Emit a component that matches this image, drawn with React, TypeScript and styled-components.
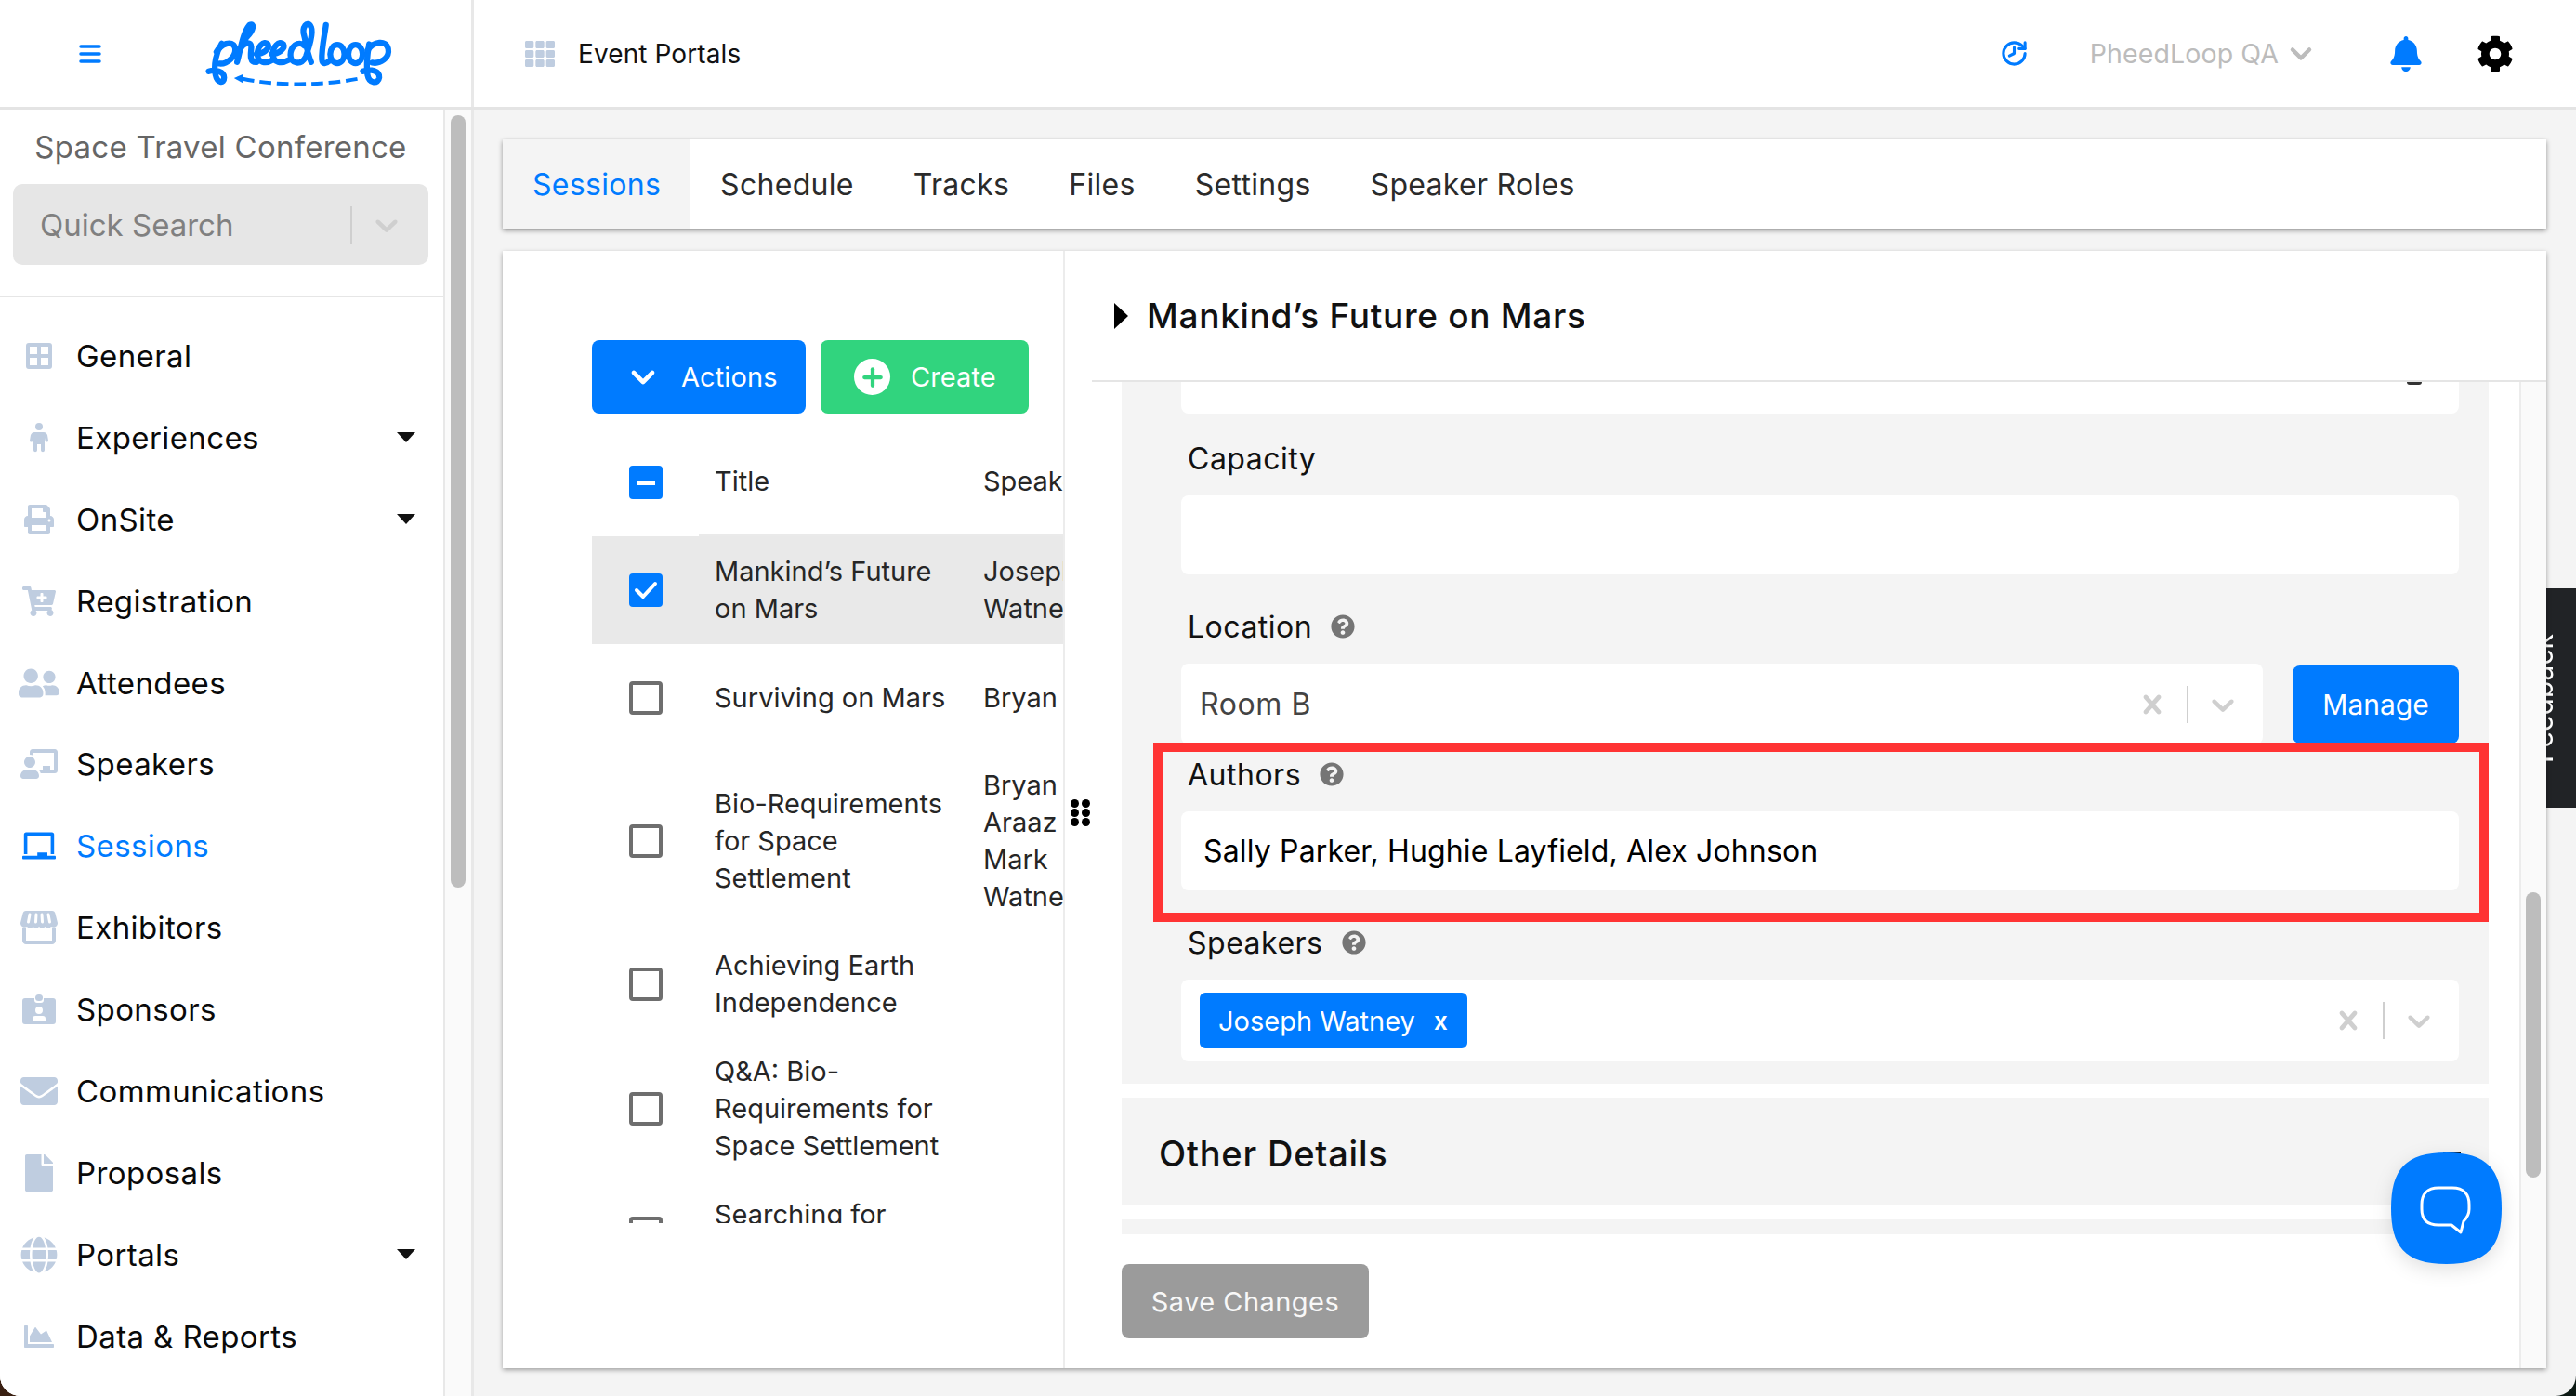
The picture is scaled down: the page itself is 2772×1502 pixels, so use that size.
import React from 'react'
import styled, { createGlobalStyle } from 'styled-components'
import { ChevronDown, History, Plus } from 'lucide-react'
import {
  FaBell,
  FaCartPlus,
  FaChalkboard,
  FaChalkboardTeacher,
  FaChartArea,
  FaCog,
  FaEnvelope,
  FaFile,
  FaGlobe,
  FaPrint,
  FaQuestionCircle,
  FaTh,
  FaUserFriends,
} from 'react-icons/fa'

const BLUE = '#007bff'
const ICON = '#bfcde0'
const FONT = 'Inter, "Open Sans", sans-serif'

const Global = createGlobalStyle`
  html, body { margin: 0; padding: 0; width: 2772px; height: 1502px; overflow: hidden; }
  body { background: linear-gradient(90deg, #3a2012, #0c1a14); font-family: ${FONT}; }
  * { box-sizing: border-box; }
`

const Frame = styled.div`
  position: relative;
  width: 2772px;
  height: 1502px;
  display: flex;
  flex-direction: column;
  overflow: hidden;
  background: #f4f4f4;
  border-radius: 0 0 22px 22px;
`

/* top bar */
const TopBar = styled.header`
  height: 118px;
  flex: none;
  display: flex;
  background: #fff;
  border-bottom: 3px solid #e4e4e4;
`
const Brand = styled.div`
  width: 510px;
  display: flex;
  align-items: center;
  gap: 112px;
  padding-left: 85px;
  border-right: 3px solid #e8e8e8;
`
const Crumb = styled.div`
  flex: 1;
  display: flex;
  align-items: center;
  gap: 25px;
  padding: 0 67px 0 55px;
  font-size: 28px;
  letter-spacing: 0.1px;
  color: #111;
`
const TopRight = styled.div`
  margin-left: auto;
  display: flex;
  align-items: center;
`
const Account = styled.div`
  display: flex;
  align-items: center;
  gap: 6px;
  margin: 0 76px 0 66px;
  font-size: 28.5px;
  color: #bcbcbc;
`

/* sidebar */
const Body = styled.div`
  flex: 1;
  min-height: 0;
  display: flex;
`
const Sidebar = styled.aside`
  width: 510px;
  flex: none;
  display: flex;
  background: #fafafa;
  border-right: 3px solid #e8e8e8;
`
const SideMain = styled.div`
  width: 479px;
  flex: none;
  background: #fff;
  border-right: 2px solid #e8e8e8;
  overflow: hidden;
`
const SideHead = styled.div`
  height: 202px;
  padding: 16px 16px 0 14px;
  border-bottom: 2px solid #e6e6e6;
`
const EventName = styled.div`
  height: 48px;
  line-height: 48px;
  text-align: center;
  font-size: 33px;
  letter-spacing: 0.25px;
  color: #666;
`
const QuickSearch = styled.div`
  height: 87px;
  margin-top: 16px;
  display: flex;
  align-items: center;
  padding: 0 25px 0 29px;
  background: #e6e6e6;
  border-radius: 10px;
  font-size: 33px;
  color: #808080;
`
const SearchLabel = styled.span`
  flex: 1;
`
const Nav = styled.nav`
  padding-top: 19px;
`
const NavRow = styled.div<{ $active?: boolean }>`
  height: 87.9px;
  display: flex;
  align-items: center;
  gap: 18px;
  padding-left: 20px;
  font-size: 33px;
  letter-spacing: 0.4px;
  color: ${(p) => (p.$active ? BLUE : '#0a0a0a')};
`
const NavIcon = styled.span<{ $active?: boolean }>`
  width: 44px;
  height: 44px;
  flex: none;
  display: flex;
  align-items: center;
  justify-content: center;
  color: ${(p) => (p.$active ? BLUE : ICON)};
`
const Caret = styled.span`
  margin-left: auto;
  margin-right: 30px;
  width: 0;
  height: 0;
  border-left: 10px solid transparent;
  border-right: 10px solid transparent;
  border-top: 11px solid #111;
`
const SideTrack = styled.div`
  flex: 1;
  padding: 6px 6px 0;
`
const Thumb = styled.div<{ $height: number }>`
  width: 16px;
  height: ${(p) => p.$height}px;
  border-radius: 8px;
  background: #bdbdbd;
`

/* main column */
const Main = styled.main`
  flex: 1;
  min-width: 0;
  display: flex;
  flex-direction: column;
  gap: 24px;
  padding: 32px 32px 30px 31px;
`
const TabBar = styled.div`
  position: relative;
  z-index: 1;
  height: 96px;
  flex: none;
  display: flex;
  background: #fff;
  box-shadow: 0 2px 5px rgba(0, 0, 0, 0.4);
`
const Tab = styled.div<{ $active?: boolean }>`
  display: flex;
  align-items: center;
  padding: 0 32px;
  font-size: 32px;
  letter-spacing: 0.3px;
  background: ${(p) => (p.$active ? '#f4f4f4' : 'transparent')};
  color: ${(p) => (p.$active ? BLUE : '#2b2b2b')};
`
const Card = styled.section`
  position: relative;
  z-index: 1;
  flex: 1;
  min-height: 0;
  display: flex;
  background: #fff;
  box-shadow: 0 2px 5px rgba(0, 0, 0, 0.35);
`
const ListPane = styled.div`
  width: 605px;
  flex: none;
  padding: 96px 0 0 96px;
  border-right: 2px solid #ececec;
  overflow: hidden;
`
const Actions = styled.div`
  display: flex;
  gap: 16px;
  margin-bottom: 16px;
`
const Button = styled.button<{ $color: string; $width: number; $gap: number; $pad: number }>`
  height: 79px;
  width: ${(p) => p.$width}px;
  display: flex;
  align-items: center;
  gap: ${(p) => p.$gap}px;
  padding: 0 0 0 ${(p) => p.$pad}px;
  border: 0;
  border-radius: 8px;
  background: ${(p) => p.$color};
  color: #fff;
  font-family: ${FONT};
  font-size: 29px;
  letter-spacing: 0.1px;
`
const PlusDisc = styled.span`
  width: 39px;
  height: 39px;
  border-radius: 50%;
  background: #fff;
  color: #31d47e;
  display: flex;
  align-items: center;
  justify-content: center;
`
const ListClip = styled.div`
  height: 855px;
  overflow: hidden;
`
const Row = styled.div<{ $selected?: boolean }>`
  display: grid;
  grid-template-columns: 115px 306px 1fr;
  min-height: 116px;
  background: ${(p) => (p.$selected ? '#e9e9e9' : 'transparent')};
  font-size: 29px;
  line-height: 40px;
  color: #262626;
  white-space: nowrap;
`
const Cell = styled.div<{ $line?: boolean; $pad?: number }>`
  display: flex;
  align-items: center;
  padding: 16px 0 16px ${(p) => p.$pad ?? 0}px;
  overflow: hidden;
  border-bottom: ${(p) => (p.$line ? '2px solid #eaeaea' : '0')};
`
const CheckCell = styled(Cell)`
  justify-content: center;
`
const Check = styled.span<{ $on?: boolean }>`
  width: 36px;
  height: 36px;
  flex: none;
  display: flex;
  align-items: center;
  justify-content: center;
  border-radius: 4px;
  background: ${(p) => (p.$on ? BLUE : '#fff')};
  border: ${(p) => (p.$on ? '0' : '4px solid #6e6e6e')};
`
const MinusBar = styled.span`
  width: 20px;
  height: 5px;
  background: #fff;
`
const Grip = styled.div`
  position: absolute;
  left: 611px;
  top: 590px;
  width: 21px;
  display: grid;
  grid-template-columns: 9px 9px;
  gap: 1px 3px;
  & > i {
    width: 9px;
    height: 9px;
    border-radius: 50%;
    background: #000;
  }
`

/* detail pane */
const DetailPane = styled.div`
  flex: 1;
  min-width: 0;
  display: flex;
  flex-direction: column;
`
const DetailHead = styled.div`
  height: 141px;
  flex: none;
  margin-left: 29px;
  display: flex;
  align-items: center;
  gap: 20px;
  padding-left: 24px;
  border-bottom: 2px solid #e5e5e5;
  font-size: 37px;
  font-weight: 500;
  letter-spacing: 0.7px;
  color: #111;
`
const Triangle = styled.span`
  width: 0;
  height: 0;
  border-top: 14px solid transparent;
  border-bottom: 14px solid transparent;
  border-left: 15px solid #000;
`
const DetailBody = styled.div`
  flex: 1;
  min-height: 0;
  display: flex;
`
const FormColumn = styled.div`
  flex: 1;
  min-width: 0;
  display: flex;
  flex-direction: column;
`
const FormClip = styled.div`
  position: relative;
  height: 917px;
  flex: none;
  padding: 0 33px 0 61px;
  overflow: hidden;
`
const Sheet = styled.div<{ $height?: number }>`
  background: #f4f4f4;
  margin-bottom: 15px;
  height: ${(p) => (p.$height ? `${p.$height}px` : 'auto')};
`
const Fields = styled(Sheet)`
  padding: 0 32px 24px 64px;
`
const FieldLabel = styled.div<{ $top: number }>`
  height: 48px;
  margin: ${(p) => p.$top}px 0 16px 7px;
  display: flex;
  align-items: center;
  gap: 20px;
  font-size: 32px;
  letter-spacing: 0.5px;
  color: #111;
`
const Box = styled.div<{ $height: number }>`
  height: ${(p) => p.$height}px;
  flex: 1;
  min-width: 0;
  display: flex;
  align-items: center;
  background: #fff;
  border-radius: 8px;
`
const StubBox = styled(Box)`
  align-items: flex-start;
  justify-content: flex-end;
  padding-right: 40px;
  border-radius: 0 0 8px 8px;
`
const StubMark = styled.span`
  width: 16px;
  height: 3px;
  background: #333;
  border-radius: 0 0 8px 8px;
`
const SelectValue = styled.span`
  flex: 1;
  padding-left: 20px;
  font-size: 32px;
  letter-spacing: 0.6px;
  color: #444;
`
const InputText = styled.span`
  padding-left: 24px;
  font-size: 32px;
  letter-spacing: 0.15px;
  color: #000;
`
const Indicators = styled.span<{ $flush?: boolean }>`
  display: flex;
  align-items: center;
  gap: 17px;
  padding-right: ${(p) => (p.$flush ? 0 : 23)}px;
`
const IndicatorRule = styled.span`
  width: 2px;
  height: 40px;
  background: #cfcfcf;
`
const ReactSelectIcon = styled.svg`
  width: 40px;
  height: 40px;
  fill: #cfcfcf;
`
const InlineField = styled.div`
  display: flex;
  align-items: flex-start;
  gap: 32px;
`
const ManageButton = styled.button`
  width: 179px;
  height: 84px;
  margin-top: 2px;
  border: 0;
  border-radius: 8px;
  background: ${BLUE};
  color: #fff;
  font-family: ${FONT};
  font-size: 30px;
`
const TagWrap = styled.span`
  flex: 1;
  padding-left: 20px;
`
const Tag = styled.span`
  display: inline-flex;
  align-items: center;
  gap: 20px;
  height: 60px;
  padding: 0 21px 0 20px;
  border-radius: 6px;
  background: ${BLUE};
  color: #fff;
  font-size: 29px;
`
const TagClose = styled.span`
  font-size: 26px;
  font-weight: 600;
`
const SectionHead = styled(Sheet)`
  display: flex;
  align-items: center;
  justify-content: space-between;
  padding: 4px 30px 0 40px;
  font-size: 38px;
  font-weight: 500;
  letter-spacing: 0.8px;
  color: #111;
`
const Collapse = styled.span`
  width: 19px;
  height: 3px;
  background: #111;
`
const Highlight = styled.div`
  position: absolute;
  left: 95px;
  top: 388px;
  width: 1437px;
  height: 193px;
  border: 10px solid #ff3333;
  pointer-events: none;
`
const FormFooter = styled.div`
  padding: 32px 0 0 61px;
`
const SaveButton = styled.button`
  width: 266px;
  height: 80px;
  border: 0;
  border-radius: 8px;
  background: #9b9b9b;
  color: #f8f8f8;
  font-family: ${FONT};
  font-size: 29px;
  letter-spacing: 0.45px;
`
const DetailTrack = styled.div`
  width: 29px;
  flex: none;
  padding: 549px 0 0 5px;
  background: #fafafa;
  border-left: 2px solid #ececec;
`

/* overlays */
const Feedback = styled.div`
  position: absolute;
  right: 0;
  top: 633px;
  width: 72px;
  height: 236px;
  display: flex;
  align-items: center;
  justify-content: flex-end;
  padding-right: 21px;
  background: #212326;
  color: #fff;
  font-size: 30px;
`
const FeedbackText = styled.span`
  writing-mode: vertical-rl;
  transform: rotate(180deg);
  line-height: 30px;
`
const ChatBubble = styled.div`
  position: absolute;
  z-index: 2;
  right: 80px;
  bottom: 142px;
  width: 119px;
  height: 120px;
  filter: drop-shadow(0 6px 10px rgba(0, 0, 0, 0.12));
`

const Logo = () => (
  <svg width="203" height="73" viewBox="120 60 610 220" fill="none" stroke={BLUE} strokeWidth="19" strokeLinecap="round" strokeLinejoin="round" aria-label="pheedloop logo">
    <path d="M172 138C155 165 145 205 152 240C157 265 180 270 180 248C180 228 150 222 130 228" />
    <path d="M155 165C170 140 205 125 215 150C222 178 190 205 165 203" />
    <path d="M222 198C235 150 240 105 262 78C280 70 275 95 255 115C245 128 238 135 232 155C245 135 268 128 268 150C268 165 258 200 285 198" />
    <path d="M285 172C305 172 330 155 322 140C310 125 285 150 288 175C290 200 315 205 335 192" />
    <path d="M335 172C355 172 380 155 372 140C360 125 335 150 338 175C340 200 365 205 388 192" />
    <path d="M440 145C420 125 395 150 395 175C395 205 430 210 445 180C455 150 470 105 462 85C450 60 430 85 440 115C445 135 450 170 462 198" />
    <path d="M510 78C505 115 495 160 497 190C498 205 510 205 520 195" />
    <ellipse cx="547" cy="172" rx="23" ry="30" />
    <ellipse cx="606" cy="172" rx="23" ry="30" />
    <path d="M650 140C645 170 640 210 645 240C650 268 680 270 683 248C685 228 655 218 630 228" />
    <path d="M645 160C665 130 705 125 712 155C718 185 685 205 660 200" />
    <path d="M240 252C340 275 500 275 615 252" strokeWidth="12" strokeDasharray="38 18" strokeLinecap="butt" />
    <path d="M212 250L240 238V266Z" fill={BLUE} stroke="none" />
  </svg>
)

const Hamburger = () => (
  <svg width="24" height="22" viewBox="0 0 24 22" stroke={BLUE} strokeWidth="3.5" strokeLinecap="round">
    <path d="M2 3H22M2 11H22M2 19H22" />
  </svg>
)

const GeneralIcon = () => (
  <svg width="28" height="28" viewBox="0 0 28 28" fill={ICON}>
    <path fillRule="evenodd" d="M3 0H25A3 3 0 0 1 28 3V25A3 3 0 0 1 25 28H3A3 3 0 0 1 0 25V3A3 3 0 0 1 3 0ZM4 4V12H12V4ZM16 4V12H24V4ZM4 16V24H12V16ZM16 16V24H24V16Z" />
  </svg>
)

const PersonIcon = () => (
  <svg width="20" height="32" viewBox="0 0 20 32" fill={ICON}>
    <circle cx="10" cy="4" r="4" />
    <path d="M5 10H15C17 10 18 11 19 13L20 19C20 21 17 21 16.5 19L16 16V29C16 32 12 32 12 29V23H8V29C8 32 4 32 4 29V16L3.5 19C3 21 0 21 0 19L1 13C2 11 3 10 5 10Z" />
  </svg>
)

const StoreIcon = () => (
  <svg width="40" height="36" viewBox="0 0 40 36">
    <path d="M6 0H34C36 0 37 1 37.5 3L40 13C40 17 36 19 33 17C31 19 28 19 26.5 17C24.5 19 22 19 20 17C18 19 15.500 19 13.500 17C12 19 9 19 7 17C4 19 0 17 0 13L2.500 3C3 1 4 0 6 0Z" fill={ICON} />
    <path d="M10 4L8.500 12M17 4L16.500 12M23 4L23.500 12M30 4L31.500 12" stroke="#fff" strokeWidth="3" strokeLinecap="round" />
    <path d="M4 18V32C4 33 5 34 6 34H34C35 34 36 33 36 32V18" fill="none" stroke={ICON} strokeWidth="4" />
  </svg>
)

const BadgeIcon = () => (
  <svg width="36" height="32" viewBox="0 0 36 32" fill={ICON}>
    <path fillRule="evenodd" d="M3 4H13V6A3 3 0 0 0 16 9H20A3 3 0 0 0 23 6V4H33A3 3 0 0 1 36 7V29A3 3 0 0 1 33 32H3A3 3 0 0 1 0 29V7A3 3 0 0 1 3 4ZM18 13A4 4 0 1 0 18 21A4 4 0 0 0 18 13ZM11 28H25V26A3 3 0 0 0 22 23H14A3 3 0 0 0 11 26Z" />
    <rect x="14" y="0" width="8" height="7" rx="3.5" />
  </svg>
)

const crossPath =
  'M14.348 14.849c-0.469 0.469-1.229 0.469-1.697 0l-2.651-3.030-2.651 3.029c-0.469 0.469-1.229 0.469-1.697 0-0.469-0.469-0.469-1.229 0-1.697l2.758-3.15-2.759-3.152c-0.469-0.469-0.469-1.228 0-1.697s1.228-0.469 1.697 0l2.652 3.031 2.651-3.031c0.469-0.469 1.228-0.469 1.697 0s0.469 1.229 0 1.697l-2.758 3.152 2.758 3.15c0.469 0.469 0.469 1.229 0 1.698z'
const chevronPath =
  'M4.516 7.548c0.436-0.446 1.043-0.481 1.576 0l3.908 3.747 3.908-3.747c0.533-0.481 1.141-0.446 1.574 0 0.436 0.445 0.408 1.197 0 1.615-0.406 0.418-4.695 4.502-4.695 4.502-0.217 0.223-0.502 0.335-0.787 0.335s-0.57-0.112-0.789-0.335c0 0-4.287-4.084-4.695-4.502s-0.436-1.17 0-1.615z'

const Cross = () => (
  <ReactSelectIcon viewBox="0 0 20 20">
    <path d={crossPath} />
  </ReactSelectIcon>
)
const Chevron = () => (
  <ReactSelectIcon viewBox="0 0 20 20">
    <path d={chevronPath} />
  </ReactSelectIcon>
)

const navItems = [
  { label: 'General', icon: <GeneralIcon /> },
  { label: 'Experiences', icon: <PersonIcon />, caret: true },
  { label: 'OnSite', icon: <FaPrint size={32} />, caret: true },
  { label: 'Registration', icon: <FaCartPlus size={36} /> },
  { label: 'Attendees', icon: <FaUserFriends size={44} /> },
  { label: 'Speakers', icon: <FaChalkboardTeacher size={40} /> },
  { label: 'Sessions', icon: <FaChalkboard size={36} />, active: true },
  { label: 'Exhibitors', icon: <StoreIcon /> },
  { label: 'Sponsors', icon: <BadgeIcon /> },
  { label: 'Communications', icon: <FaEnvelope size={40} /> },
  { label: 'Proposals', icon: <FaFile size={40} /> },
  { label: 'Portals', icon: <FaGlobe size={40} />, caret: true },
  { label: 'Data & Reports', icon: <FaChartArea size={32} /> },
]

const tabs = ['Sessions', 'Schedule', 'Tracks', 'Files', 'Settings', 'Speaker Roles']

const sessions = [
  { title: ['Mankind’s Future', 'on Mars'], speakers: ['Joseph', 'Watney'], selected: true },
  { title: ['Surviving on Mars'], speakers: ['Bryan'] },
  { title: ['Bio-Requirements', 'for Space', 'Settlement'], speakers: ['Bryan', 'Araaz', 'Mark', 'Watney'] },
  { title: ['Achieving Earth', 'Independence'], speakers: [] },
  { title: ['Q&A: Bio-', 'Requirements for', 'Space Settlement'], speakers: [] },
  { title: ['Searching for', 'Water on Mars'], speakers: [] },
]

const Lines = ({ lines }: { lines: string[] }) => (
  <div>
    {lines.map((line) => (
      <div key={line}>{line}</div>
    ))}
  </div>
)

const App = () => (
  <Frame>
    <Global />
    <TopBar>
      <Brand>
        <Hamburger />
        <Logo />
      </Brand>
      <Crumb>
        <FaTh size={32} color={ICON} />
        Event Portals
        <TopRight>
          <History size={31} color={BLUE} strokeWidth={2.4} style={{ transform: 'scaleX(-1)' }} />
          <Account>
            PheedLoop QA
            <ChevronDown size={36} strokeWidth={3} />
          </Account>
          <FaBell size={38} color={BLUE} />
          <FaCog size={40} color="#000" style={{ marginLeft: 57 }} />
        </TopRight>
      </Crumb>
    </TopBar>
    <Body>
      <Sidebar>
        <SideMain>
          <SideHead>
            <EventName>Space Travel Conference</EventName>
            <QuickSearch>
              <SearchLabel>Quick Search</SearchLabel>
              <Indicators $flush>
                <IndicatorRule />
                <Chevron />
              </Indicators>
            </QuickSearch>
          </SideHead>
          <Nav>
            {navItems.map((item) => (
              <NavRow key={item.label} $active={item.active}>
                <NavIcon $active={item.active}>{item.icon}</NavIcon>
                {item.label}
                {item.caret && <Caret />}
              </NavRow>
            ))}
          </Nav>
        </SideMain>
        <SideTrack>
          <Thumb $height={831} />
        </SideTrack>
      </Sidebar>
      <Main>
        <TabBar>
          {tabs.map((tab, i) => (
            <Tab key={tab} $active={i === 0}>
              {tab}
            </Tab>
          ))}
        </TabBar>
        <Card>
          <ListPane>
            <Actions>
              <Button $color={BLUE} $width={230} $gap={21} $pad={35}>
                <ChevronDown size={40} strokeWidth={2.8} />
                Actions
              </Button>
              <Button $color="#31d47e" $width={224} $gap={22} $pad={36}>
                <PlusDisc>
                  <Plus size={30} strokeWidth={3.4} />
                </PlusDisc>
                Create
              </Button>
            </Actions>
            <ListClip>
              <Row>
                <CheckCell>
                  <Check $on>
                    <MinusBar />
                  </Check>
                </CheckCell>
                <Cell $line $pad={17}>Title</Cell>
                <Cell $line>Speakers</Cell>
              </Row>
              {sessions.map((s) => (
                <Row key={s.title[0]} $selected={s.selected}>
                  <CheckCell>
                    <Check $on={s.selected}>
                      {s.selected && (
                        <svg width="28" height="24" viewBox="0 0 28 24" fill="none" stroke="#fff" strokeWidth="4" strokeLinecap="round" strokeLinejoin="round">
                          <path d="M4 12L11 19L24 5" />
                        </svg>
                      )}
                    </Check>
                  </CheckCell>
                  <Cell $pad={17}>
                    <Lines lines={s.title} />
                  </Cell>
                  <Cell>
                    <Lines lines={s.speakers} />
                  </Cell>
                </Row>
              ))}
            </ListClip>
          </ListPane>
          <Grip>
            <i /><i /><i /><i /><i /><i />
          </Grip>
          <DetailPane>
            <DetailHead>
              <Triangle />
              Mankind’s Future on Mars
            </DetailHead>
            <DetailBody>
              <FormColumn>
                <FormClip>
                  <Fields>
                    <InlineField>
                      <StubBox $height={34}>
                        <StubMark />
                      </StubBox>
                    </InlineField>
                    <FieldLabel $top={24}>Capacity</FieldLabel>
                    <InlineField>
                      <Box $height={85} />
                    </InlineField>
                    <FieldLabel $top={32}>
                      Location
                      <FaQuestionCircle size={26} color="#757575" />
                    </FieldLabel>
                    <InlineField>
                      <Box $height={87}>
                        <SelectValue>Room B</SelectValue>
                        <Indicators>
                          <Cross />
                          <IndicatorRule />
                          <Chevron />
                        </Indicators>
                      </Box>
                      <ManageButton>Manage</ManageButton>
                    </InlineField>
                    <FieldLabel $top={8}>
                      Authors
                      <FaQuestionCircle size={26} color="#757575" />
                    </FieldLabel>
                    <InlineField>
                      <Box $height={85}>
                        <InputText>Sally Parker, Hughie Layfield, Alex Johnson</InputText>
                      </Box>
                    </InlineField>
                    <FieldLabel $top={32}>
                      Speakers
                      <FaQuestionCircle size={26} color="#757575" />
                    </FieldLabel>
                    <InlineField>
                      <Box $height={88}>
                        <TagWrap>
                          <Tag>
                            Joseph Watney
                            <TagClose>x</TagClose>
                          </Tag>
                        </TagWrap>
                        <Indicators>
                          <Cross />
                          <IndicatorRule />
                          <Chevron />
                        </Indicators>
                      </Box>
                    </InlineField>
                  </Fields>
                  <SectionHead $height={116}>
                    Other Details
                    <Collapse />
                  </SectionHead>
                  <Sheet $height={60} />
                  <Highlight />
                </FormClip>
                <FormFooter>
                  <SaveButton>Save Changes</SaveButton>
                </FormFooter>
              </FormColumn>
              <DetailTrack>
                <Thumb $height={307} />
              </DetailTrack>
            </DetailBody>
          </DetailPane>
        </Card>
      </Main>
    </Body>
    <Feedback>
      <FeedbackText>Feedback</FeedbackText>
    </Feedback>
    <ChatBubble>
      <svg width="119" height="120" viewBox="0 0 119 120">
        <path d="M59.5 0C105 0 119 20 119 60C119 100 105 120 59.5 120C14 120 0 100 0 60C0 20 14 0 59.5 0Z" fill={BLUE} />
        <path d="M51 38H66C78 38 84 45 84 56V61C84 67 82 70 78 74L75 86L65 78H51C39 78 33 72 33 61V56C33 45 39 38 51 38Z" fill="none" stroke="#fff" strokeWidth="3" strokeLinejoin="round" />
      </svg>
    </ChatBubble>
  </Frame>
)

export default App
